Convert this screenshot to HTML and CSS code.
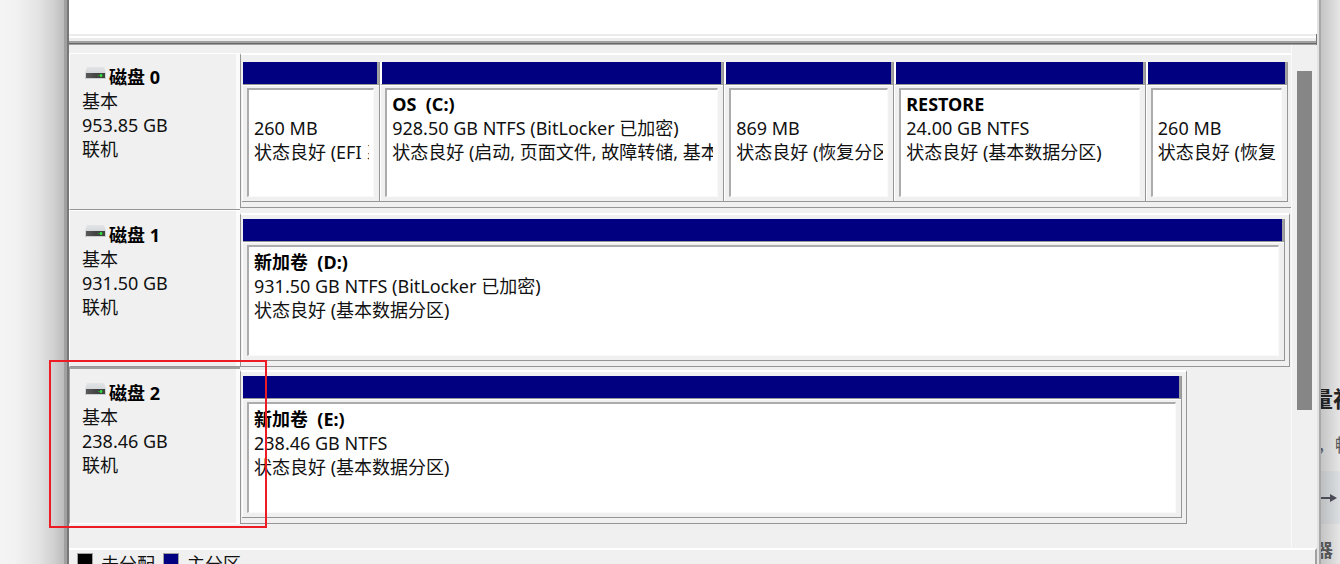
FILE: index.html
```html
<!DOCTYPE html>
<html lang="zh-CN">
<head>
<meta charset="utf-8">
<title>磁盘管理</title>
<link rel="stylesheet" href="styles.css">
</head>
<body>
<svg width="0" height="0" class="defs" aria-hidden="true">
  <defs>
    <linearGradient id="lid" x1="0" y1="0" x2="0" y2="1"><stop offset="0" stop-color="#e2e4e6"/><stop offset="1" stop-color="#c9cdd0"/></linearGradient>
    <linearGradient id="front" x1="0" y1="0" x2="1" y2="0"><stop offset="0" stop-color="#5a5a5a"/><stop offset=".5" stop-color="#444"/><stop offset="1" stop-color="#3c443c"/></linearGradient>
    <symbol id="drive" viewBox="0 0 21 13">
      <path d="M2 0h17l2 6v6H0V6z" fill="url(#lid)"/>
      <path d="M1 6h19v5H1z" fill="url(#front)"/>
      <path d="M13 8h5v1h-5z" fill="#1f9a2a"/>
      <path d="M15 7h2v3h-2z" fill="#35d541"/>
    </symbol>
  </defs>
</svg>
<div class="desktop">
  <div class="backdrop-left"></div>
  <main class="window">
    <div class="volume-pane"></div>
    <div class="splitter"></div>
    <div class="disk-view">
      <div class="disk-list">
        <section class="disk">
          <div class="disk-info">
            <h2><svg class="drive"><use href="#drive"/></svg>磁盘 0</h2>
            <p>基本</p><p>953.85 GB</p><p>联机</p>
          </div>
          <div class="graph graph-first">
            <div class="part" style="flex-grow:138"><div class="bar"></div><div class="cell"><div class="text"><h3></h3><p>260 MB</p><p>状态良好 (EFI 系</p></div></div></div>
            <div class="part" style="flex-grow:345"><div class="bar"></div><div class="cell"><div class="text"><h3>OS&nbsp; (C:)</h3><p>928.50 GB NTFS (BitLocker 已加密)</p><p>状态良好 (启动, 页面文件, 故障转储, 基本</p></div></div></div>
            <div class="part" style="flex-grow:170"><div class="bar"></div><div class="cell"><div class="text"><h3></h3><p>869 MB</p><p>状态良好 (恢复分区</p></div></div></div>
            <div class="part" style="flex-grow:252"><div class="bar"></div><div class="cell"><div class="text"><h3>RESTORE</h3><p>24.00 GB NTFS</p><p>状态良好 (基本数据分区)</p></div></div></div>
            <div class="part" style="flex-grow:142"><div class="bar"></div><div class="cell"><div class="text"><h3></h3><p>260 MB</p><p>状态良好 (恢复</p></div></div></div>
          </div>
        </section>
        <section class="disk">
          <div class="disk-info">
            <h2><svg class="drive"><use href="#drive"/></svg>磁盘 1</h2>
            <p>基本</p><p>931.50 GB</p><p>联机</p>
          </div>
          <div class="graph">
            <div class="part" style="flex-grow:1"><div class="bar"></div><div class="cell"><div class="text"><h3>新加卷&nbsp; (D:)</h3><p>931.50 GB NTFS (BitLocker 已加密)</p><p>状态良好 (基本数据分区)</p></div></div></div>
          </div>
        </section>
        <section class="disk selected">
          <div class="disk-info">
            <h2><svg class="drive"><use href="#drive"/></svg>磁盘 2</h2>
            <p>基本</p><p>238.46 GB</p><p>联机</p>
          </div>
          <div class="graph graph-short">
            <div class="part" style="flex-grow:1"><div class="bar"></div><div class="cell"><div class="text"><h3>新加卷&nbsp; (E:)</h3><p>238.46 GB NTFS</p><p>状态良好 (基本数据分区)</p></div></div></div>
          </div>
          <div class="marker"></div>
        </section>
      </div>
      <div class="scrollbar"><div class="thumb"></div></div>
    </div>
    <footer class="legend">
      <span class="key"><i class="swatch black"></i>未分配</span>
      <span class="key"><i class="swatch navy"></i>主分区</span>
    </footer>
  </main>
  <aside class="backdrop-right">
    <h4>量初</h4>
    <p>，畅</p>
    <div class="go"><svg viewBox="0 0 16 12"><path d="M0 6h11" stroke="#4a4b57" stroke-width="2"/><path d="M9 2l7 4-7 4z" fill="#4a4b57"/></svg></div>
    <h5>器</h5>
  </aside>
</div>
</body>
</html>
```
FILE: styles.css
```css
* { box-sizing: border-box; }
body {
  margin: 0;
  background: #f0f0f0;
  color: #111;
  font: 18px/24px "Noto Sans", "Noto Sans CJK SC", sans-serif;
}
h2, h3, h4, h5, p { margin: 0; font-size: 18px; line-height: 24px; }
h2, h3 { font-weight: 700; color: #000; }
.defs { position: absolute; }
.desktop {
  display: grid;
  grid-template-columns: 64px minmax(0, 1fr) 19px;
  height: 100vh;
  overflow: hidden;
}
.backdrop-left { background: linear-gradient(90deg, #f4f4f4 0, #f2f2f2 15px, #e4e4e4 38px, #d0d0d0 54px, #bcbcbc 64px); }
.window {
  display: flex;
  flex-direction: column;
  background: #f0f0f0;
  border-left: 3px solid #a0a0a0;
  border-right: 2px solid #a8a8a8;
  box-shadow: inset 2px 0 #777, inset -2px 0 #e2e2e2;
  padding: 0 2px;
}
.volume-pane { height: 34px; background: #fff; flex: none; }
.splitter {
  flex: none;
  height: 11px;
  background: linear-gradient(#ececec 0 2px, #fff 2px 4px, #ececec 4px 7px, #a0a0a0 7px 9px, #696969 9px 10px, #a0a0a0 10px 11px);
  border-right: 1px solid #777;
}
.disk-view { display: flex; height: 503px; flex: none; padding-right: 5px; }
.disk-list { flex: 1; min-width: 0; padding-top: 8px; border-right: 1px solid #fafafa; }
.disk { position: relative; display: flex; height: 157px; }
.disk-info {
  width: 171px;
  flex: none;
  padding: 11px 0 0 12px;
  border-top: 1px solid #fff;
  border-bottom: 1px solid #959595;
  border-left: 1px solid #fff;
  box-shadow: inset -4px 0 #fbfbfb;
}
.disk + .disk .disk-info { padding-top: 12px; }
.disk.selected .disk-info { border-top: 2px solid #a0a0a0; border-left-color: #a0a0a0; border-bottom-color: #fff; }
.drive { width: 21px; height: 13px; margin: 0 3px 9px 3px; vertical-align: bottom; }
.graph {
  flex: 1;
  min-width: 0;
  display: flex;
  margin: 3px 1px 0 0;
  padding: 4px 4px 5px 1px;
  border: 1px solid #959595;
  border-top: 2px solid #fff;
}
.graph-first { margin: 0; height: 155px; padding: 7px 3px 5px 1px; border-right: 0; }
.graph-short { margin-right: 104px; }
.part {
  flex: 1 1 0;
  min-width: 0;
  display: flex;
  flex-direction: column;
  border-right: 1px solid #959595;
  border-bottom: 1px solid #959595;
}
.bar {
  height: 23px;
  flex: none;
  margin-left: 1px;
  background: #000080;
  border-right: 2px solid #a0a0a0;
  border-bottom: 1px solid #959595;
}
.part + .part .bar { margin-left: 0; border-left: 2px solid #fff; }
.cell {
  flex: 1;
  min-height: 0;
  padding: 2px 5px 4px 4px;
  border-top: 1px solid #fff;
  border-left: 1px solid #fff;
}
.text {
  height: 100%;
  padding: 3px 4px 0 5px;
  background: #fff;
  border: 2px solid #acacac;
  border-right: 1px solid #fafafa;
  border-bottom: 1px solid #fafafa;
}
.graph-first .text { padding-top: 2px; }
.text h3 { min-height: 24px; }
.text h3, .text p { overflow: hidden; white-space: nowrap; }
.marker {
  position: absolute;
  left: -20px;
  top: -7px;
  width: 218px;
  height: 168px;
  border: 2px solid #ed1c24;
}
.scrollbar { width: 20px; padding: 26px 0 0 5px; }
.thumb { width: 15px; height: 339px; background: #868686; }
.legend {
  flex: none;
  display: flex;
  gap: 8px;
  height: 40px;
  padding: 2px 0 0 8px;
  border-top: 2px solid #fff;
  border-right: 2px solid #a0a0a0;
}
.key { display: flex; align-items: flex-start; gap: 8px; }
.swatch { width: 16px; height: 16px; margin-top: 1px; border: 1px solid #a0a0a0; }
.black { background: #000; }
.navy { background: #000080; }
.backdrop-right {
  display: flex;
  flex-direction: column;
  overflow: hidden;
  padding-top: 386px;
  background: linear-gradient(90deg, #c4c4c4, #e6e6e6);
  white-space: nowrap;
}
.backdrop-right h4 { font-size: 22px; margin-left: -10px; color: #222; }
.backdrop-right p { margin: 23px 0 0 -4px; color: #555; }
.go { height: 53px; margin-top: 14px; padding-top: 21px; background: linear-gradient(90deg, #bcbec0, #dcdfe1); }
.go svg { display: block; width: 16px; height: 12px; }
.backdrop-right h5 { margin: 14px 0 0 -6px; color: #555; }
```
